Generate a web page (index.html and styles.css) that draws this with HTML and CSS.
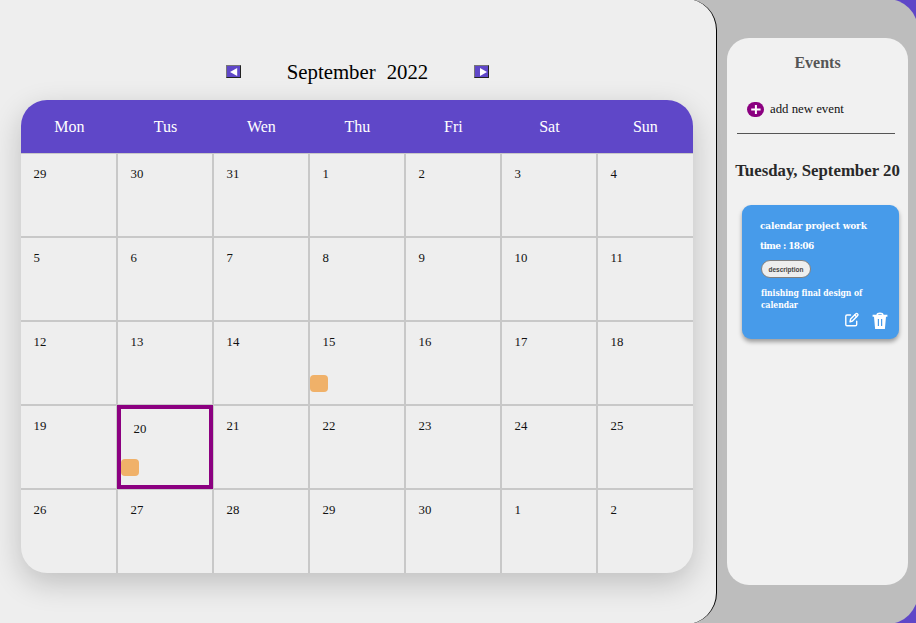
FILE: index.html
```html
<!DOCTYPE html>
<html lang="en">
<head>
<meta charset="utf-8">
<title>Calendar</title>
<link rel="stylesheet" href="styles.css">
</head>
<body>
<div class="app">
  <main class="main">
    <div class="month-nav">
      <button class="nav-btn" aria-label="Previous month"><svg width="13" height="11" viewBox="0 0 13 11"><path d="M3 6 10.2 2v8z" fill="#fff"/></svg></button>
      <h1 class="month"><span>September</span><span>2022</span></h1>
      <button class="nav-btn" aria-label="Next month"><svg width="13" height="11" viewBox="0 0 13 11"><path d="M12 6 5 2v8z" fill="#fff"/></svg></button>
    </div>
    <section class="calendar">
      <div class="weekdays"><span>Mon</span><span>Tus</span><span>Wen</span><span>Thu</span><span>Fri</span><span>Sat</span><span>Sun</span></div>
      <div class="days">
        <div class="day">29</div><div class="day">30</div><div class="day">31</div><div class="day">1</div><div class="day">2</div><div class="day">3</div><div class="day">4</div>
        <div class="day">5</div><div class="day">6</div><div class="day">7</div><div class="day">8</div><div class="day">9</div><div class="day">10</div><div class="day">11</div>
        <div class="day">12</div><div class="day">13</div><div class="day">14</div><div class="day">15<i class="marker"></i></div><div class="day">16</div><div class="day">17</div><div class="day">18</div>
        <div class="day">19</div><div class="day selected">20<i class="marker"></i></div><div class="day">21</div><div class="day">22</div><div class="day">23</div><div class="day">24</div><div class="day">25</div>
        <div class="day">26</div><div class="day">27</div><div class="day">28</div><div class="day">29</div><div class="day">30</div><div class="day">1</div><div class="day">2</div>
      </div>
    </section>
  </main>
  <aside class="events">
    <h2 class="events-title">Events</h2>
    <div class="add">
      <svg width="17" height="15" viewBox="0 0 17 15"><rect width="17" height="15" rx="7.5" fill="#8b0080"/><path d="M8.9 3v9M4.2 7.5h9.4" stroke="#fff" stroke-width="2"/></svg>
      <span>add new event</span>
    </div>
    <h3 class="date">Tuesday, September 20</h3>
    <article class="card">
      <p class="card-title">calendar project work</p>
      <p class="card-time">time : 18:06</p>
      <span class="tag">description</span>
      <p class="card-text">finishing final design of<br>calendar</p>
      <div class="actions">
        <svg width="16" height="16" viewBox="0 0 16 16" fill="none" stroke="#fff" stroke-width="1.4" stroke-linecap="round" stroke-linejoin="round"><path d="M6.5 3H3Q1.8 3 1.8 4.2v8.3Q1.8 13.7 3 13.7h8.3q1.4 0 1.4-1.2V9.3"/><path d="M6 9.8 6.6 7.1 11.9 1.8q.8-.7 1.7.1t.1 1.7L8.5 9z"/><path d="m10.8 3 1.8 1.8"/></svg>
        <svg width="16" height="18" viewBox="0 0 16 18"><path d="M5 3Q5.4 1.3 8 1.3T11 3" fill="none" stroke="#fff" stroke-width="1.5"/><path d="M.6 2.8h14.8v2H14L12.9 17H3.1L2 4.8H.6z" fill="#fff"/><path d="M6.4 7v7M9.6 7v7" stroke="#479bea" stroke-width="1.2"/></svg>
      </div>
    </article>
  </aside>
</div>
</body>
</html>
```
FILE: styles.css
```css
* { box-sizing: border-box; }
html { background: #5f47c8; overflow: hidden; }
body { margin: 0; height: 623px; overflow: hidden; display: flex; align-items: center; font-family: "Liberation Serif", serif; color: #111; }
h1, h2, h3, p { margin: 0; }
svg { display: block; }
.app {
  flex: none;
  width: 918px;
  height: 625px;
  display: flex;
  align-items: flex-start;
  background: #bdbdbd;
  border-radius: 0 31px 31px 0;
  overflow: hidden;
}
.main {
  width: 717px;
  height: 625px;
  padding: 60px 0 0 21px;
  background: #eee;
  border-right: 1px solid #000;
  border-radius: 0 31px 31px 0;
}
.month-nav {
  width: 263px;
  height: 26px;
  margin: 0 0 15px 205px;
  display: flex;
  align-items: flex-start;
  justify-content: space-between;
}
.nav-btn {
  width: 15px;
  height: 13px;
  margin-top: 6px;
  padding: 0;
  border: 1px solid;
  border-color: #767676 #222 #222 #767676;
  background: #5f47c8;
}
.nav-btn svg { margin-top: -1px; }
.month {
  display: flex;
  gap: 11px;
  font-size: 20.8px;
  font-weight: 400;
  line-height: 26px;
  color: #000;
}
.calendar {
  width: 672px;
  height: 473px;
  border-radius: 26px;
  overflow: hidden;
  background: #eee;
  box-shadow: 0 10px 30px rgba(0, 0, 0, .2);
}
.weekdays {
  height: 53px;
  padding-left: .4px;
  display: grid;
  grid-template-columns: repeat(7, 96px);
  align-items: center;
  text-align: center;
  font-size: 16px;
  color: #fff;
  background: #5f47c8;
}
.days {
  display: grid;
  grid-template-columns: repeat(7, 96px);
  grid-auto-rows: 84px;
}
.day {
  position: relative;
  padding: 12px 12px 12px 12.5px;
  border: 1px solid #c8c8c8;
  font-size: 12.8px;
  line-height: 16px;
}
.day:nth-child(7n+1) { border-left: 0; }
.day:nth-child(7n) { border-right: 0; }
.day:nth-child(n+29) { border-bottom: 0; }
.day.selected { border: 4px solid #8b0080; }
.marker {
  position: absolute;
  left: 0;
  bottom: 12px;
  width: 18px;
  height: 17px;
  border-radius: 4px;
  background: #f0b169;
}
.selected .marker { bottom: 9px; }
.events {
  width: 181px;
  height: 547px;
  margin: 39px 0 0 10px;
  padding-top: 15px;
  border-radius: 22px;
  background: #f1f1f1;
}
.events-title {
  font-size: 16px;
  line-height: 19px;
  text-align: center;
  color: #555;
}
.add {
  height: 62px;
  margin: 0 13px 0 10px;
  padding: 13px 0 0 10px;
  display: flex;
  align-items: center;
  gap: 6px;
  border-bottom: 1px solid #555;
  font-size: 12.8px;
}
.date {
  margin-top: 26px;
  font-size: 16.8px;
  line-height: 21px;
  text-align: center;
  white-space: nowrap;
  color: #292929;
}
.card {
  width: 157px;
  height: 134px;
  margin: 24px 0 0 15px;
  padding: 14px 11px 0 18px;
  border-radius: 9px;
  background: #479bea;
  box-shadow: 0 3px 4px rgba(0, 0, 0, .35);
  font-family: "DejaVu Serif Condensed", "DejaVu Serif", serif;
  font-stretch: condensed;
  font-weight: 700;
  color: #fff;
}
.card-title, .card-time {
  font-size: 10px;
  line-height: 14px;
  letter-spacing: -.18px;
  white-space: nowrap;
}
.card-time {
  margin-top: 6px;
  letter-spacing: -.6px;
}
.tag {
  width: 50px;
  height: 18px;
  margin: 7px 0 0 1px;
  display: flex;
  align-items: center;
  justify-content: center;
  border: 1px solid #808080;
  border-radius: 9px;
  background: #eee;
  font-family: "Liberation Sans", sans-serif;
  font-size: 6.5px;
  color: #444;
}
.card-text {
  margin: 9px 0 0 1px;
  font-size: 8.5px;
  line-height: 12px;
  letter-spacing: -.06px;
  white-space: nowrap;
}
.actions {
  margin-top: 1px;
  display: flex;
  justify-content: flex-end;
  gap: 12px;
}
```
